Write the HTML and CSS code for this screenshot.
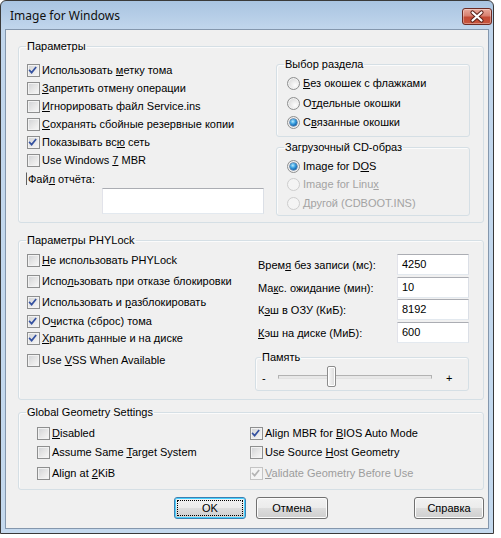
FILE: index.html
```html
<!DOCTYPE html>
<html lang="ru">
<head>
<meta charset="utf-8">
<title>Image for Windows</title>
<link rel="stylesheet" href="styles.css">
</head>
<body>
<div class="window">
  <div class="titlebar">
    <span class="title">Image for Windows</span>
    <span class="close">
      <svg width="30" height="17" viewBox="0 0 30 17">
        <path d="M10.5 4.5 L19.5 12.5 M19.5 4.5 L10.5 12.5" stroke="#5a2018" stroke-width="4.2" stroke-linecap="round"/>
        <path d="M10.5 4.5 L19.5 12.5 M19.5 4.5 L10.5 12.5" stroke="#ffffff" stroke-width="2.2" stroke-linecap="round"/>
      </svg>
    </span>
  </div>

  <div class="client">
    <fieldset class="group g-params">
      <legend>Параметры</legend>
      <div class="params-body">
        <div class="params-left">
          <div class="chk"><span class="box on"><svg viewBox="0 0 13 13"><path d="M3 6.5 L5.3 9 L10 3.2"/></svg></span><span>Использовать <u>м</u>етку тома</span></div>
          <div class="chk"><span class="box"></span><span><u>З</u>апретить отмену операции</span></div>
          <div class="chk"><span class="box"></span><span><u>И</u>гнорировать файл Service.ins</span></div>
          <div class="chk"><span class="box"></span><span><u>С</u>охранять сбойные резервные копии</span></div>
          <div class="chk"><span class="box on"><svg viewBox="0 0 13 13"><path d="M3 6.5 L5.3 9 L10 3.2"/></svg></span><span>Показывать вс<u>ю</u> сеть</span></div>
          <div class="chk"><span class="box"></span><span>Use Windows <u>7</u> MBR</span></div>
          <div class="log-row"><span class="log-label">Фай<u>л</u> отчёта:</span></div>
          <div class="edit log-edit"></div>
        </div>
        <div class="params-right">
          <fieldset class="group g-part">
            <legend>Выбор раздела</legend>
            <div class="radios rows-part">
              <div class="rad"><span class="dot"></span><span><u>Б</u>ез окошек с флажками</span></div>
              <div class="rad"><span class="dot"></span><span>О<u>т</u>дельные окошки</span></div>
              <div class="rad"><span class="dot sel"></span><span>С<u>в</u>язанные окошки</span></div>
            </div>
          </fieldset>
          <fieldset class="group g-cd">
            <legend>Загрузочный CD-образ</legend>
            <div class="radios rows-cd">
              <div class="rad"><span class="dot sel"></span><span>Image for D<u>O</u>S</span></div>
              <div class="rad off"><span class="dot"></span><span>Image for Linu<u>x</u></span></div>
              <div class="rad off"><span class="dot"></span><span><u>Д</u>ругой (CDBOOT.INS)</span></div>
            </div>
          </fieldset>
        </div>
      </div>
    </fieldset>

    <fieldset class="group g-phy">
      <legend>Параметры PHYLock</legend>
      <div class="phy-body">
        <div class="phy-left">
          <div class="chk"><span class="box"></span><span><u>Н</u>е использовать PHYLock</span></div>
          <div class="chk"><span class="box"></span><span>Испо<u>л</u>ьзовать при отказе блокировки</span></div>
          <div class="chk"><span class="box on"><svg viewBox="0 0 13 13"><path d="M3 6.5 L5.3 9 L10 3.2"/></svg></span><span>Использовать и <u>р</u>азблокировать</span></div>
          <div class="chk"><span class="box on"><svg viewBox="0 0 13 13"><path d="M3 6.5 L5.3 9 L10 3.2"/></svg></span><span>О<u>ч</u>истка (сброс) тома</span></div>
          <div class="chk"><span class="box on"><svg viewBox="0 0 13 13"><path d="M3 6.5 L5.3 9 L10 3.2"/></svg></span><span><u>Х</u>ранить данные и на диске</span></div>
          <div class="chk"><span class="box"></span><span>Use <u>V</u>SS When Available</span></div>
        </div>
        <div class="phy-right">
          <div class="fields">
            <div class="field"><span class="flabel">Врем<u>я</u> без записи (мс):</span><span class="edit num">4250</span></div>
            <div class="field"><span class="flabel">Ма<u>к</u>с. ожидание (мин):</span><span class="edit num">10</span></div>
            <div class="field"><span class="flabel">К<u>э</u>ш в ОЗУ (КиБ):</span><span class="edit num">8192</span></div>
            <div class="field"><span class="flabel"><u>К</u>эш на диске (МиБ):</span><span class="edit num">600</span></div>
          </div>
          <fieldset class="group g-mem">
            <legend>Память</legend>
            <div class="slider">
              <span class="sign">-</span>
              <span class="track"><span class="thumb"></span></span>
              <span class="sign">+</span>
            </div>
          </fieldset>
        </div>
      </div>
    </fieldset>

    <fieldset class="group g-geo">
      <legend>Global Geometry Settings</legend>
      <div class="geo-body">
        <div class="chk"><span class="box"></span><span><u>D</u>isabled</span></div>
        <div class="chk"><span class="box on"><svg viewBox="0 0 13 13"><path d="M3 6.5 L5.3 9 L10 3.2"/></svg></span><span>Align MBR for <u>B</u>IOS Auto Mode</span></div>
        <div class="chk"><span class="box"></span><span>Assume Same <u>T</u>arget System</span></div>
        <div class="chk"><span class="box"></span><span>Use Source <u>H</u>ost Geometry</span></div>
        <div class="chk"><span class="box"></span><span>Align at <u>2</u>KiB</span></div>
        <div class="chk off"><span class="box on"><svg viewBox="0 0 13 13"><path d="M3 6.5 L5.3 9 L10 3.2"/></svg></span><span><u>V</u>alidate Geometry Before Use</span></div>
      </div>
    </fieldset>

    <div class="buttons">
      <span class="btn default"><span class="focus">OK</span></span>
      <span class="btn">Отмена</span>
      <span class="btn help">Справка</span>
    </div>
  </div>
</div>
</body>
</html>
```

FILE: styles.css
```css
* { box-sizing: border-box; }

body {
  margin: 0;
  background: #ffffff;
  color: #000000;
  font-family: "Liberation Sans", Arial, sans-serif;
  font-size: 11px;
  line-height: 13px;
}

u { text-decoration: underline; text-underline-offset: 1px; }

/* ---- window frame ---- */
.window {
  width: 494px;
  height: 534px;
  border: 1px solid #3a3a3a;
  border-radius: 6px 6px 0 0;
  background: linear-gradient(#a9c4e1 0, #c1d6ec 28px, #c4d9ee 100%);
  padding: 0 4px 4px;
  display: flex;
  flex-direction: column;
}

.titlebar {
  height: 28px;
  display: flex;
  align-items: flex-start;
  justify-content: space-between;
}

.title {
  font-family: "Noto Sans", "Open Sans", sans-serif;
  font-size: 12px;
  line-height: 16px;
  margin: 7px 0 0 5px;
  color: #101010;
}

.close {
  width: 30px;
  height: 17px;
  margin: 7px -3px 0 0;
  border: 1px solid #6d2a22;
  border-radius: 3px;
  background: linear-gradient(#e9a99c 0, #d8806f 45%, #c34a35 55%, #c8553c 100%);
  box-shadow: inset 0 0 0 1px rgba(255, 255, 255, 0.35);
  display: flex;
}
.close svg { display: block; margin: -1px; }

.client {
  flex: 1;
  background: #f0f0f0;
  border: 1px solid #8497ad;
  padding: 10px 4px 0 12px;
  display: flex;
  flex-direction: column;
}

/* ---- group boxes ---- */
.group {
  margin: 0;
  padding: 0;
  min-width: 0;
  border: 1px solid #d5dfe5;
  border-radius: 3px;
  box-shadow: inset 1px 1px 0 #fbfbfb;
}
.group > legend {
  margin-left: 7px;
  padding: 0 1px;
  line-height: 13px;
  font-size: 11px;
}

/* ---- checkboxes / radios ---- */
.chk, .rad {
  display: flex;
  align-items: center;
  gap: 2px;
  height: 18px;
  white-space: nowrap;
}
.box {
  width: 13px;
  height: 13px;
  flex: none;
  border: 1px solid #8e8f8f;
  background: linear-gradient(135deg, #cfd1d4 0, #e6e6e6 50%, #f8f8f8 100%);
  box-shadow: inset 0 0 0 1px #f2f2f2;
}
.box svg { display: block; width: 11px; height: 11px; margin: 0; }
.box svg path {
  fill: none;
  stroke: #3451a0;
  stroke-width: 2;
  stroke-linecap: square;
  transform: translate(-1px, 0);
}
.chk.off { color: #9d9d9d; }
.chk.off .box { border-color: #c4c4c4; background: #f4f4f4; box-shadow: none; }
.chk.off .box svg path { stroke: #b4b4b4; }

.dot {
  width: 13px;
  height: 13px;
  flex: none;
  margin-right: 1px;
  border-radius: 50%;
  border: 1px solid #8e8f8f;
  background: radial-gradient(circle at 65% 65%, #fdfdfd 0, #e4e4e4 55%, #cfcfcf 100%);
  box-shadow: inset 0 0 0 1px #f3f3f3;
  display: flex;
  align-items: center;
  justify-content: center;
}
.dot.sel::after {
  content: "";
  width: 7px;
  height: 7px;
  border-radius: 50%;
  background: radial-gradient(circle at 40% 35%, #b9ecff 0, #3aa0e0 40%, #0f5fa8 75%, #0b4c8e 100%);
  box-shadow: 0 0 0 0.5px #1c4e86;
}
.rad.off { color: #a3a3a3; }
.rad.off .dot { border-color: #cdcdcd; background: #f4f4f4; box-shadow: none; }

/* ---- edit boxes ---- */
.edit {
  display: block;
  background: #ffffff;
  border: 1px solid;
  border-color: #abadb3 #dbdfe6 #e3e9ef #e2e3ea;
}

/* ---- "Параметры" ---- */
.params-body {
  display: flex;
  height: 169px;
}
.params-left {
  width: 257px;
  flex: none;
  padding: 8px 0 0 8px;
}
.log-row {
  height: 18px;
  display: flex;
  align-items: center;
}
.log-label {
  margin-left: -1px;
  padding-left: 1px;
  border-left: 1px solid #5f5f5f;
  border-top: 1px solid #5f5f5f;
  line-height: 12px;
  border-top-color: transparent;
}
.log-edit {
  width: 162px;
  height: 26px;
  margin: 1px 0 0 75px;
}
.params-right {
  width: 194px;
  flex: none;
}
.g-part { margin-top: 5px; }
.g-cd { margin-top: 4px; }
.radios {
  display: grid;
  padding: 3px 0 0 10px;
}
.rows-part { grid-template-rows: 20px 19px 18px; padding-bottom: 5px; }
.rows-cd { grid-template-rows: 18px 19px 18px; padding-bottom: 3px; }

/* ---- PHYLock ---- */
.g-phy { margin-top: 11px; }
.phy-body {
  display: flex;
  height: 152px;
}
.phy-left {
  width: 236px;
  flex: none;
  padding: 4px 0 0 8px;
  display: grid;
  grid-template-rows: 21px 21px 19px 17px 22px 18px;
  align-content: start;
}
.phy-right {
  width: 214px;
  flex: none;
}
.fields {
  display: grid;
  grid-template-rows: 23px 22px 23px 21px;
  padding-top: 7px;
}
.field {
  display: flex;
  justify-content: space-between;
  align-items: flex-start;
  padding-left: 3px;
}
.flabel { padding-top: 5px; }
.num {
  width: 72px;
  height: 21px;
  padding: 3px 0 0 4px;
}
.g-mem { margin-top: 8px; }
.g-mem > legend { margin-left: 5px; }
.slider {
  height: 26px;
  display: flex;
  align-items: center;
  padding: 0 0 1px 6px;
}
.sign { width: 8px; padding-top: 3px; }
.track {
  position: relative;
  width: 154px;
  height: 4px;
  margin: 0 14px 0 8px;
  border: 1px solid #b2b2b2;
  border-bottom-color: #e2e2e2;
  background: #e8e8e8;
}
.thumb {
  position: absolute;
  left: 48px;
  top: -10px;
  width: 9px;
  height: 21px;
  border: 1px solid #8c8c8c;
  border-radius: 2px;
  background: linear-gradient(90deg, #f9f9f9 0, #eaeaea 50%, #d9d9d9 100%);
  box-shadow: inset 0 0 0 1px #ffffff;
}

/* ---- Global Geometry ---- */
.g-geo { margin-top: 6px; }
.geo-body {
  display: grid;
  grid-template-columns: 213px 1fr;
  grid-template-rows: 19px 21px 18px;
  align-items: start;
  padding: 5px 0 7px 18px;
}

/* ---- buttons ---- */
.buttons {
  display: flex;
  margin-top: 7px;
  padding-left: 156px;
}
.btn {
  width: 72px;
  height: 22px;
  border: 1px solid #707070;
  border-radius: 3px;
  background: linear-gradient(#f2f2f2 0, #ebebeb 50%, #dddddd 50%, #cfcfcf 100%);
  box-shadow: inset 0 0 0 1px #fcfcfc;
  display: flex;
  align-items: center;
  justify-content: center;
}
.btn + .btn { margin-left: 10px; }
.btn.help { margin-left: auto; width: 70px; }
.btn.default {
  border-color: #3c7fb1;
  box-shadow: inset 0 0 0 1px #48d1ff;
  padding: 2px;
}
.focus {
  width: 100%;
  height: 100%;
  border: 1px dotted #000;
  display: flex;
  align-items: center;
  justify-content: center;
}
```
